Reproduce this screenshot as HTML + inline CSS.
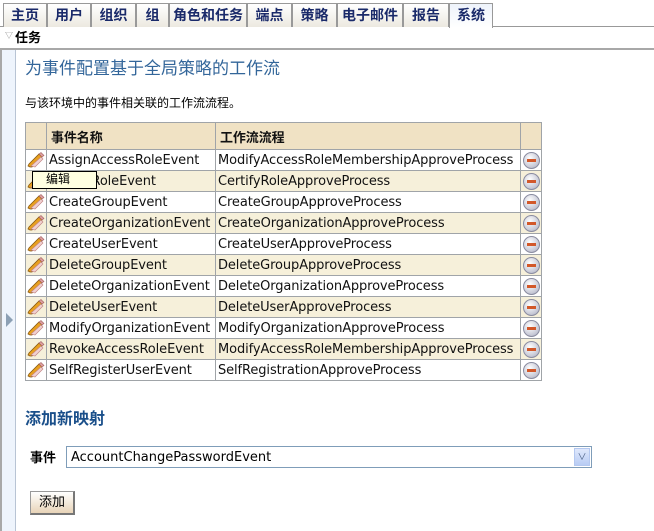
<!DOCTYPE html>
<html><head><meta charset="utf-8"><style>
*{margin:0;padding:0;box-sizing:border-box}
body{width:654px;height:531px;background:#fff;font-family:"Liberation Sans","Noto Sans CJK SC",sans-serif;font-size:13px;position:relative;overflow:hidden;color:#000}
.tab{position:absolute;top:3px;height:24px;border:1px solid #999;border-bottom:none;background:linear-gradient(#fff,#ece9e0);color:#1a2a6a;font-weight:bold;font-size:14px;text-align:center;line-height:22px}
.sel{background:linear-gradient(#eef3fb,#fff);height:25px}
.abs{position:absolute}
table{border-collapse:collapse;position:absolute;left:25px;top:122px;table-layout:fixed;width:516px}
td{border:1px solid #a0a4a8;height:21px;padding:0 2px;font-family:"DejaVu Sans","Noto Sans CJK SC",sans-serif;font-size:13px;letter-spacing:-0.1px;white-space:nowrap;overflow:hidden;color:#111}
tr.h td{background:#f0e2c4;font-weight:bold;height:27px;padding-left:4px;font-family:"Liberation Sans","Noto Sans CJK SC",sans-serif;font-size:13px}
tr.a td{background:#f6f0da}
.pen{width:18px;height:16px;display:block}
.del{width:17px;height:17px;border-radius:50%;background:radial-gradient(circle at 40% 35%,#fff,#c4c6d4 70%,#9a9cb0);border:1px solid #8a8ca0;position:relative;margin:auto}
.del:after{content:"";position:absolute;left:3px;top:6px;width:9px;height:3px;background:#d2582a}
</style></head><body>
<div class="tab" style="left:3px;width:44px">主页</div>
<div class="tab" style="left:47px;width:44px">用户</div>
<div class="tab" style="left:91px;width:45px">组织</div>
<div class="tab" style="left:136px;width:33px">组</div>
<div class="tab" style="left:169px;width:78px">角色和任务</div>
<div class="tab" style="left:247px;width:45px">端点</div>
<div class="tab" style="left:292px;width:45px">策略</div>
<div class="tab" style="left:337px;width:66px">电子邮件</div>
<div class="tab" style="left:403px;width:46px">报告</div>
<div class="tab sel" style="left:449px;width:44px">系统</div>
<div class="abs" style="left:0;top:26px;width:3px;height:1px;background:#999"></div>
<div class="abs" style="left:492px;top:26px;width:162px;height:1px;background:#999"></div>
<div class="abs" style="left:5px;top:30px;font-size:8px;color:#888">▽</div>
<div class="abs" style="left:15px;top:27px;font-weight:bold;font-size:13px">任务</div>
<div class="abs" style="left:0;top:48px;width:654px;height:2px;background:#a8a8a8"></div>
<div class="abs" style="left:0;top:50px;width:2px;height:481px;background:#a8a8a8"></div>
<div class="abs" style="left:2px;top:50px;width:14px;height:481px;background:#eef4fc;border-right:1px solid #b8c4d4"></div>
<div class="abs" style="left:6px;top:313px;width:0;height:0;border-left:7px solid #8ca0b4;border-top:7px solid transparent;border-bottom:7px solid transparent"></div>
<div class="abs" style="left:25px;top:54px;font-size:17px;color:#33669a">为事件配置基于全局策略的工作流</div>
<div class="abs" style="left:25px;top:94px;font-size:12px">与该环境中的事件相关联的工作流流程。</div>
<table>
<colgroup><col style="width:21px"><col style="width:169px"><col style="width:305px"><col style="width:21px"></colgroup>
<tr class="h"><td></td><td>事件名称</td><td>工作流流程</td><td></td></tr>
</table>
<script>
var rows=[["AssignAccessRoleEvent","ModifyAccessRoleMembershipApproveProcess"],["CertifyRoleEvent","CertifyRoleApproveProcess"],["CreateGroupEvent","CreateGroupApproveProcess"],["CreateOrganizationEvent","CreateOrganizationApproveProcess"],["CreateUserEvent","CreateUserApproveProcess"],["DeleteGroupEvent","DeleteGroupApproveProcess"],["DeleteOrganizationEvent","DeleteOrganizationApproveProcess"],["DeleteUserEvent","DeleteUserApproveProcess"],["ModifyOrganizationEvent","ModifyOrganizationApproveProcess"],["RevokeAccessRoleEvent","ModifyAccessRoleMembershipApproveProcess"],["SelfRegisterUserEvent","SelfRegistrationApproveProcess"]];
var pen='<svg class="pen" viewBox="0 0 18 16"><path d="M3 15 L1 14 L2 12 L12 2 L15 5 L5 15Z" fill="#e8a020" stroke="#8a5a10" stroke-width="0.8"/><path d="M12 2 L14 0.5 L17 3.5 L15 5Z" fill="#e0a0a0" stroke="#a06060" stroke-width="0.6"/><path d="M4 14 L14 5 L16 7 L8 15Z" fill="#f0d0d0" stroke="#c08080" stroke-width="0.6"/></svg>';
var t=document.querySelector('table'),h='';
rows.forEach(function(r,i){h+='<tr class="'+(i%2?'a':'')+'"><td style="padding:0 1px">'+pen+'</td><td>'+r[0]+'</td><td>'+r[1]+'</td><td><div class="del"></div></td></tr>';});
t.insertAdjacentHTML('beforeend',h);
</script>
<div class="abs" style="left:32px;top:171px;width:65px;height:18px;background:#ffffe1;border:1px solid #000;font-size:12px;padding-left:13px;line-height:15px">编辑</div>
<div class="abs" style="left:25px;top:405px;font-size:16px;font-weight:bold;color:#1a4f8a">添加新映射</div>
<div class="abs" style="left:30px;top:447px;font-weight:bold;font-size:13px">事件</div>
<div class="abs" style="left:66px;top:446px;width:526px;height:22px;border:1px solid #7f9db9;font-family:'DejaVu Sans',sans-serif;font-size:13px;padding:3px 4px;line-height:16px">AccountChangePasswordEvent</div>
<div class="abs" style="left:574px;top:448px;width:16px;height:18px;background:linear-gradient(#dfe8fc,#b8ccf4);border:1px solid #b4c8f0;color:#4d6185;font-size:9px;text-align:center;line-height:17px">∨</div>
<div class="abs" style="left:30px;top:491px;width:45px;height:24px;border:1px solid #999;border-right:2px solid #777;border-bottom:2px solid #777;background:linear-gradient(#fff,#e8d4b8);font-size:13px;text-align:center;line-height:20px">添加</div>
</body></html>
